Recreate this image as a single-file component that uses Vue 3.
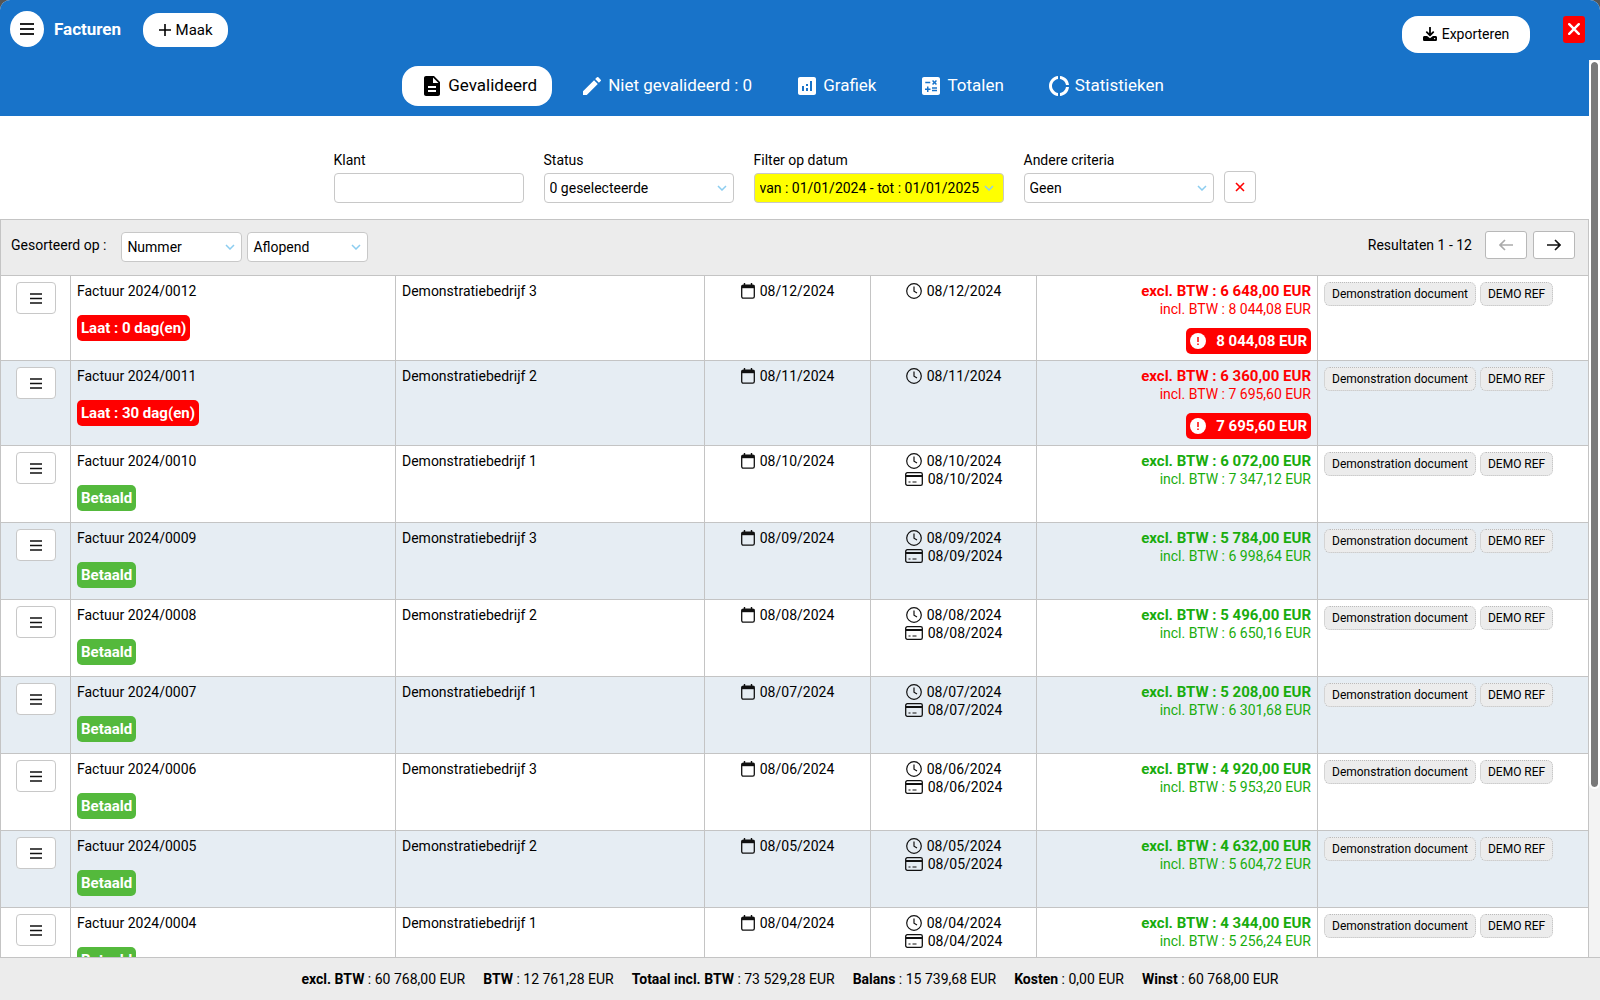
<script setup>
import { ref } from 'vue'

const tabs = [
  { id: 'validated', label: 'Gevalideerd' },
  { id: 'draft', label: 'Niet gevalideerd : 0' },
  { id: 'chart', label: 'Grafiek' },
  { id: 'totals', label: 'Totalen' },
  { id: 'stats', label: 'Statistieken' },
]
const activeTab = ref('validated')
const client = ref('')

const icons = {
  validated: 'M14 2H6c-1.100 0-2 .9-2 2v16c0 1.100.9 2 2 2h12c1.100 0 2-.9 2-2V8l-6-6zm2 16H8v-2h8v2zm0-4H8v-2h8v2zm-3-5V3.500L18.500 9H13z',
  draft: 'M3 17.250V21h3.750L17.810 9.940l-3.750-3.750L3 17.250zM20.710 7.040a1 1 0 0 0 0-1.410l-2.340-2.340a1 1 0 0 0-1.410 0l-1.830 1.830 3.750 3.750 1.830-1.830z',
  chart: 'M19 3H5c-1.100 0-2 .9-2 2v14c0 1.100.9 2 2 2h14c1.100 0 2-.9 2-2V5c0-1.100-.9-2-2-2zM9 17H7v-5h2v5zm4 0h-2v-3h2v3zm0-5h-2v-2h2v2zm4 5h-2V7h2v10z',
  totals: 'M19 3H5c-1.100 0-2 .9-2 2v14c0 1.100.9 2 2 2h14c1.100 0 2-.9 2-2V5c0-1.100-.9-2-2-2zm-5.970 4.060L14.090 6l1.410 1.410L16.910 6l1.060 1.060-1.410 1.410 1.410 1.410-1.060 1.060-1.410-1.400-1.410 1.410-1.060-1.060 1.410-1.410-1.410-1.420zm-6.780.660h5v1.500h-5v-1.500zM11.500 16h-2v2H8v-2H6v-1.500h2v-2h1.500v2h2V16zm6.500 1.250h-5v-1.500h5v1.500zm0-2.500h-5v-1.500h5v1.500z',
  stats: 'M11 5.080V2C6 2.500 2 6.810 2 12s4 9.500 9 10v-3.080c-3-.480-6-3.400-6-6.920s3-6.440 6-6.920zM18.970 11H22c-.470-5-4-8.530-9-9v3.080C16 5.510 18.540 8 18.970 11zM13 18.920V22c5-.470 8.530-4 9-9h-3.030c-.430 3-2.970 5.490-5.970 5.920z',
}

const invoices = [
  { nr: '2024/0012', client: 3, date: '08/12/2024', excl: '6 648,00', incl: '8 044,08', late: 0 },
  { nr: '2024/0011', client: 2, date: '08/11/2024', excl: '6 360,00', incl: '7 695,60', late: 30 },
  { nr: '2024/0010', client: 1, date: '08/10/2024', excl: '6 072,00', incl: '7 347,12' },
  { nr: '2024/0009', client: 3, date: '08/09/2024', excl: '5 784,00', incl: '6 998,64' },
  { nr: '2024/0008', client: 2, date: '08/08/2024', excl: '5 496,00', incl: '6 650,16' },
  { nr: '2024/0007', client: 1, date: '08/07/2024', excl: '5 208,00', incl: '6 301,68' },
  { nr: '2024/0006', client: 3, date: '08/06/2024', excl: '4 920,00', incl: '5 953,20' },
  { nr: '2024/0005', client: 2, date: '08/05/2024', excl: '4 632,00', incl: '5 604,72' },
  { nr: '2024/0004', client: 1, date: '08/04/2024', excl: '4 344,00', incl: '5 256,24' },
].map((row) => ({ ...row, paid: row.late === undefined }))

const totals = [
  ['excl. BTW', '60 768,00 EUR'],
  ['BTW', '12 761,28 EUR'],
  ['Totaal incl. BTW', '73 529,28 EUR'],
  ['Balans', '15 739,68 EUR'],
  ['Kosten', '0,00 EUR'],
  ['Winst', '60 768,00 EUR'],
]
</script>

<template>
  <div class="window">
    <header class="topbar">
      <button class="menu" aria-label="Menu">
        <svg width="14" height="14" viewBox="0 0 14 14"><path d="M0 2h14M0 7h14M0 12h14" stroke="#222" stroke-width="2" /></svg>
      </button>
      <h1>Facturen</h1>
      <button class="pill make">
        <svg width="12" height="12" viewBox="0 0 12 12"><path d="M6 0v12M0 6h12" stroke="#000" stroke-width="1.600" /></svg>
        Maak
      </button>
      <button class="pill export">
        <svg width="14" height="14" viewBox="0 0 14 14">
          <path d="M7 0.500v7.500M3.800 5.200L7 8.400l3.200-3.200" fill="none" stroke="#000" stroke-width="1.800" stroke-linecap="round" stroke-linejoin="round" />
          <path d="M1.500 9h2.600L7 11.300 9.900 9h2.600c.8 0 1.500.6 1.500 1.400v2c0 .9-.7 1.600-1.500 1.600h-11C.7 14 0 13.300 0 12.400v-2C0 9.600.7 9 1.500 9z" />
          <circle cx="11.600" cy="11.600" r=".7" fill="#fff" />
        </svg>
        Exporteren
      </button>
      <button class="close" aria-label="Sluiten">
        <svg width="12" height="12" viewBox="0 0 12 12"><path d="M1.200 1.200l9.600 9.600M10.800 1.200L1.200 10.800" stroke="#fff" stroke-width="2.400" stroke-linecap="round" /></svg>
      </button>
    </header>

    <div class="body">
      <main class="content">
        <nav class="tabs">
          <button v-for="t in tabs" :key="t.id" :class="['tab', { active: activeTab === t.id }]" @click="activeTab = t.id">
            <svg width="24" height="24" viewBox="0 0 24 24" fill="currentColor"><path :d="icons[t.id]" fill-rule="evenodd" /></svg>
            <span>{{ t.label }}</span>
          </button>
        </nav>

        <form class="filters" @submit.prevent>
          <div class="field">
            <label for="f-client">Klant</label>
            <input id="f-client" v-model="client" type="text" />
          </div>
          <div class="field">
            <label for="f-status">Status</label>
            <div class="select">
              <select id="f-status"><option>0 geselecteerde</option></select>
              <svg class="chev" viewBox="0 0 10 6"><path d="M1 1l4 4 4-4" /></svg>
            </div>
          </div>
          <div class="field date">
            <label for="f-date">Filter op datum</label>
            <div class="select">
              <select id="f-date"><option>van : 01/01/2024 - tot : 01/01/2025</option></select>
              <svg class="chev" viewBox="0 0 10 6"><path d="M1 1l4 4 4-4" /></svg>
            </div>
          </div>
          <div class="field">
            <label for="f-other">Andere criteria</label>
            <div class="select">
              <select id="f-other"><option>Geen</option></select>
              <svg class="chev" viewBox="0 0 10 6"><path d="M1 1l4 4 4-4" /></svg>
            </div>
          </div>
          <button type="reset" class="reset" aria-label="Filters wissen">
            <svg width="10" height="10" viewBox="0 0 10 10"><path d="M1 1l8 8M9 1L1 9" stroke="#f00" stroke-width="1.600" /></svg>
          </button>
        </form>

        <section class="sortbar">
          <label for="s-field">Gesorteerd op :</label>
          <div class="select">
            <select id="s-field"><option>Nummer</option></select>
            <svg class="chev" viewBox="0 0 10 6"><path d="M1 1l4 4 4-4" /></svg>
          </div>
          <div class="select">
            <select aria-label="Sorteervolgorde"><option>Aflopend</option></select>
            <svg class="chev" viewBox="0 0 10 6"><path d="M1 1l4 4 4-4" /></svg>
          </div>
          <span class="results">Resultaten 1 - 12</span>
          <button class="page" disabled aria-label="Vorige">
            <svg width="14" height="12" viewBox="0 0 14 12"><path d="M14 6H1M6 1L1 6l5 5" /></svg>
          </button>
          <button class="page" aria-label="Volgende">
            <svg width="14" height="12" viewBox="0 0 14 12"><path d="M0 6h13M8 1l5 5-5 5" /></svg>
          </button>
        </section>

        <table>
          <colgroup>
            <col class="c-menu" /><col class="c-nr" /><col class="c-client" /><col class="c-date" /><col class="c-date" /><col class="c-amount" /><col class="c-tags" />
          </colgroup>
          <tbody>
            <tr v-for="row in invoices" :key="row.nr" :class="row.paid ? 'paid' : 'late'">
              <td class="actions">
                <button aria-label="Acties">
                  <svg width="12" height="11" viewBox="0 0 12 11"><path d="M0 1h12M0 5.500h12M0 10h12" stroke="#111" stroke-width="1.500" /></svg>
                </button>
              </td>
              <td>
                <div>Factuur {{ row.nr }}</div>
                <span class="badge">{{ row.paid ? 'Betaald' : `Laat : ${row.late} dag(en)` }}</span>
              </td>
              <td>Demonstratiebedrijf {{ row.client }}</td>
              <td class="dates">
                <div>
                  <svg width="14" height="16" viewBox="0 0 14 16"><path d="M3.500 0v3M10.500 0v3" stroke="#111" stroke-width="1.400" /><rect x=".7" y="2.200" width="12.600" height="13" rx="1.600" fill="none" stroke="#111" stroke-width="1.300" /><path d="M.7 2h12.600v3.200H.7z" fill="#111" /></svg>
                  {{ row.date }}
                </div>
              </td>
              <td class="dates">
                <div>
                  <svg width="16" height="16" viewBox="0 0 16 16"><circle cx="8" cy="8" r="7.300" fill="none" stroke="#111" stroke-width="1.200" /><path d="M8 3.500V8.200l3 1.900" fill="none" stroke="#111" stroke-width="1.200" /></svg>
                  {{ row.date }}
                </div>
                <div v-if="row.paid">
                  <svg width="18" height="14" viewBox="0 0 18 14"><rect x=".7" y=".7" width="16.600" height="12.600" rx="1.600" fill="none" stroke="#111" stroke-width="1.300" /><path d="M1 4h16" stroke="#111" stroke-width="2" /><path d="M3.500 10h2M7.500 10h4" stroke="#111" stroke-width="1.200" /></svg>
                  {{ row.date }}
                </div>
              </td>
              <td class="amount">
                <strong>excl. BTW : {{ row.excl }} EUR</strong>
                <div>incl. BTW : {{ row.incl }} EUR</div>
                <span v-if="!row.paid" class="badge due">
                  <svg width="16" height="16" viewBox="0 0 16 16"><circle cx="8" cy="8" r="8" fill="#fff" /><path d="M8 4v5M8 10.500v1.500" stroke="#f00" stroke-width="1.500" /></svg>
                  {{ row.incl }} EUR
                </span>
              </td>
              <td>
                <div class="tags"><span>Demonstration document</span><span>DEMO REF</span></div>
              </td>
            </tr>
          </tbody>
        </table>
      </main>
      <div class="track"><div class="thumb"></div></div>
    </div>

    <footer>
      <span v-for="[name, value] in totals" :key="name"><b>{{ name }}</b> : {{ value }}</span>
    </footer>
  </div>
</template>

<style>
body {
  margin: 0;
  background: #555;
}
</style>

<style scoped>
* {
  box-sizing: border-box;
}
.window {
  display: flex;
  flex-direction: column;
  height: 100vh;
  overflow: hidden;
  border-radius: 10px 10px 0 0;
  background: #fff;
  color: #000;
  font: 14px/18px Roboto, "Noto Sans", sans-serif;
}
button,
input,
select {
  margin: 0;
  color: inherit;
  font: inherit;
}
button {
  display: inline-flex;
  align-items: center;
  justify-content: center;
  padding: 0;
  border: 0;
  background: #fff;
  cursor: pointer;
}
.topbar {
  display: flex;
  flex: none;
  align-items: center;
  height: 60px;
  padding: 0 15px 2px 10px;
  background: #1873c9;
}
.menu {
  width: 34px;
  height: 36px;
  border-radius: 50%;
}
h1 {
  margin: 0 22px 0 10px;
  color: #fff;
  font-size: 17px;
  line-height: 20px;
}
.pill {
  gap: 5px;
  border-radius: 16px;
}
.make {
  width: 85px;
  height: 34px;
  margin-top: 2px;
  font-size: 15px;
}
.export {
  width: 128px;
  height: 37px;
  margin: 10px 33px 0 auto;
}
.close {
  width: 22px;
  height: 27px;
  border-radius: 3px;
  background: #f00;
}
.body {
  display: flex;
  flex: 1;
  min-height: 0;
}
.content {
  flex: 1;
  min-width: 0;
  overflow-y: auto;
  scrollbar-width: none;
}
.track {
  flex: none;
  width: 11px;
  padding: 2px 2px 0;
  background: #f3f3f3;
}
.thumb {
  width: 7px;
  height: 81%;
  border-radius: 4px;
  outline: 2px solid #fff;
  background: #7a7a7a;
}
.tabs {
  display: flex;
  justify-content: center;
  gap: 10px;
  height: 56px;
  padding: 6px 8px 0 0;
  background: #1873c9;
}
.tab {
  gap: 4px;
  height: 40px;
  padding: 0 15px 0 18px;
  border-radius: 16px;
  background: transparent;
  color: #fff;
  font-size: 17px;
  line-height: 20px;
}
.tab span {
  padding-bottom: 3px;
}
.tab.active {
  background: #fff;
  color: #000;
}
.filters {
  display: flex;
  justify-content: center;
  align-items: flex-end;
  gap: 20px;
  padding: 35px 0 16px;
}
.field {
  display: flex;
  flex-direction: column;
  gap: 4px;
  width: 190px;
}
.date {
  width: 250px;
}
.field input,
select {
  width: 100%;
  height: 30px;
  padding: 0 5px;
  border: 1px solid #c8c8c8;
  border-radius: 4px;
  background: #fff;
  appearance: none;
}
.date select {
  background: #ff0;
}
.select {
  display: grid;
  align-items: center;
}
.select > * {
  grid-area: 1 / 1;
}
.chev {
  justify-self: end;
  width: 10px;
  height: 6px;
  margin-right: 7px;
  fill: none;
  stroke: #8ccdf0;
  stroke-width: 1.500;
  pointer-events: none;
}
.date .chev {
  margin-right: 10px;
}
.reset {
  width: 32px;
  height: 32px;
  margin-left: -10px;
  border: 1px solid #c8c8c8;
  border-radius: 4px;
}
.sortbar {
  display: flex;
  align-items: center;
  gap: 5px;
  height: 56px;
  padding: 0 13px 5px 10px;
  border: 1px solid #c4c4c4;
  border-bottom: 0;
  background: #ececec;
}
.sortbar label {
  margin-right: 10px;
}
.sortbar .select {
  width: 121px;
  margin-top: 4px;
}
.results {
  margin: 0 8px 0 auto;
}
.page {
  width: 42px;
  height: 28px;
  border: 1px solid #b8b8b8;
  border-radius: 3px;
}
.page + .page {
  margin-left: 1px;
}
.page svg {
  fill: none;
  stroke: #111;
  stroke-width: 1.600;
}
.page:disabled svg {
  stroke: #aaa;
}
table {
  width: 100%;
  border-collapse: collapse;
  table-layout: fixed;
}
.c-menu { width: 70px; }
.c-nr { width: 325px; }
.c-client { width: 309px; }
.c-date { width: 166px; }
.c-amount { width: 281px; }
td {
  height: 77px;
  padding: 6px;
  border: 1px solid #c4c4c4;
  vertical-align: top;
}
.late td {
  height: 85px;
}
tr:nth-child(even) {
  background: #e6edf3;
}
.actions {
  padding: 6px 0 0;
  text-align: center;
}
.actions button {
  width: 40px;
  height: 32px;
  border: 1px solid #c8c8c8;
  border-radius: 4px;
}
.badge {
  display: inline-flex;
  align-items: center;
  height: 26px;
  margin-top: 15px;
  padding: 0 4px;
  border-radius: 5px;
  background: #f00;
  color: #fff;
  font-size: 15px;
  font-weight: 700;
}
.paid .badge {
  background: #54b93c;
}
.dates div {
  display: flex;
  align-items: center;
  justify-content: center;
  gap: 5px;
}
.amount {
  color: #19ac0e;
  text-align: right;
}
.amount strong {
  display: block;
  font-size: 15px;
}
.late .amount {
  color: #f00;
}
.due {
  gap: 10px;
  margin-top: 10px;
}
.tags {
  display: flex;
  gap: 4px;
  font-size: 12px;
}
.tags span {
  height: 24px;
  padding: 2px 7px;
  border: 1px dotted #bbb;
  border-radius: 6px;
  background: #ececec;
}
footer {
  display: flex;
  flex: none;
  align-items: center;
  justify-content: center;
  gap: 18px;
  height: 43px;
  padding-right: 20px;
  border-top: 1px solid #c4c4c4;
  background: #ececec;
}
</style>
